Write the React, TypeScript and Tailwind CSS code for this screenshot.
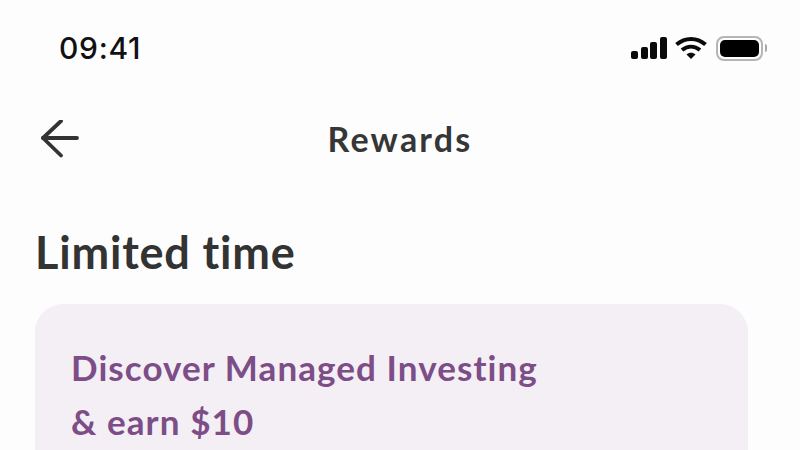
export default function App() {
  return (
    <div className="h-[450px] w-[800px] overflow-hidden bg-[#fdfdfd] font-['Lato',sans-serif]">
      {/* status bar */}
      <div className="flex h-[96px] items-center justify-between pl-[59px] pr-[33px]">
        <span className="font-['Inter',sans-serif] text-[30px] leading-none font-medium tracking-[0.7px] text-[#111]">09:41</span>
        <div className="flex items-center">
          <svg className="mr-[8px]" width="36" height="24" viewBox="0 0 36 24" fill="#0a0a0a">
            <rect x="0" y="15" width="7" height="8" rx="2" />
            <rect x="10" y="11" width="7" height="12" rx="2" />
            <rect x="19" y="6" width="7" height="17" rx="2" />
            <rect x="29" y="1" width="7" height="22" rx="2" />
          </svg>
          <svg className="mr-[9px]" width="32" height="24" viewBox="0 0 32 24" fill="none" stroke="#0a0a0a" strokeWidth="4">
            <path d="M1.500 8.500C10 1 22 1 30.500 8.500" />
            <path d="M7 14C12.500 9.500 19.500 9.500 25 14" />
            <path d="M16 23L11.500 18.500C14 16 18 16 20.500 18.500Z" fill="#0a0a0a" stroke="none" />
          </svg>
          <div className="flex items-center gap-[2px]">
            <div className="h-[25px] w-[47px] rounded-[8px] border-2 border-[#b5b5b5] p-[2px]">
              <div className="h-full w-full rounded-[5px] bg-black" />
            </div>
            <div className="h-[8px] w-[2px] rounded-r-full bg-[#a8a8a8]" />
          </div>
        </div>
      </div>

      {/* nav */}
      <div className="relative flex h-[88px] items-center pl-[40px]">
        <svg width="40" height="40" viewBox="0 0 40 40" fill="none" stroke="#333" strokeWidth="3.800" strokeLinecap="round" strokeLinejoin="round">
          <path d="M3 18H37" />
          <path d="M21 1L3 18L21 35.500" />
        </svg>
        <h1 className="absolute inset-x-0 -mt-[2px] text-center text-[34px] leading-none font-bold tracking-[2.200px] text-[#363636]">Rewards</h1>
      </div>

      {/* section */}
      <div className="pl-[35px] pr-[52px] pt-[42px]">
        <h2 className="text-[45px] leading-[52px] font-bold tracking-[0.8px] text-[#333]">Limited time</h2>
        <div className="mt-[26px] h-[200px] rounded-[28px] bg-[#f3eff5] pl-[36px] pt-[36px]">
          <p className="text-[35px] leading-[54px] font-bold tracking-[1.080px] text-[#7d4d87]">
            Discover Managed Investing
            <br />
            &amp; earn $10
          </p>
        </div>
      </div>
    </div>
  );
}
